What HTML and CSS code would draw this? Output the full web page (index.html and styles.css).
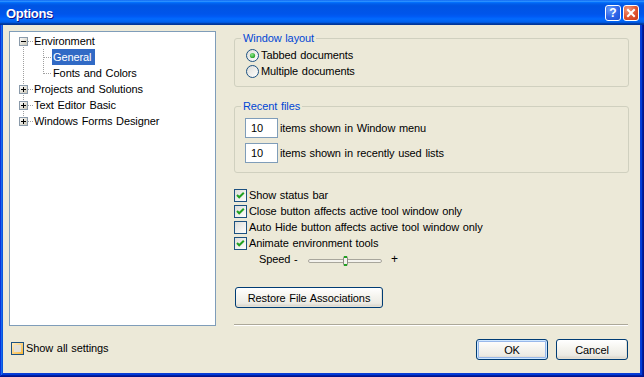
FILE: index.html
```html
<!DOCTYPE html>
<html>
<head>
<meta charset="utf-8">
<link rel="stylesheet" href="styles.css">
</head>
<body>
<svg class="defs" width="0" height="0" aria-hidden="true">
  <defs>
    <linearGradient id="cg" x1="0" y1="0" x2="1" y2="1">
      <stop offset="0" stop-color="#DCDCD7"/>
      <stop offset="1" stop-color="#FFFFFF"/>
    </linearGradient>
    <linearGradient id="og" x1="0" y1="0" x2="1" y2="1">
      <stop offset="0" stop-color="#FFF0CF"/>
      <stop offset="1" stop-color="#F8B330"/>
    </linearGradient>
    <linearGradient id="bg" x1="0" y1="0" x2="1" y2="1">
      <stop offset="0" stop-color="#FFFFFF"/>
      <stop offset="1" stop-color="#C8C4B4"/>
    </linearGradient>
    <radialGradient id="gd" cx="0.4" cy="0.35" r="0.7">
      <stop offset="0" stop-color="#8CE88A"/>
      <stop offset="1" stop-color="#1E9A1E"/>
    </radialGradient>
  </defs>
</svg>
<div class="window">
  <div class="titlebar">
    <span class="title">Options</span>
    <div class="title-buttons">
      <span class="tbtn help">?</span>
      <span class="tbtn close"><svg width="14" height="14" viewBox="0 0 14 14"><path d="M4 4L10 10M10 4L4 10" stroke="#fff" stroke-width="2" stroke-linecap="square"/></svg></span>
    </div>
  </div>
  <div class="client">
    <div class="left">
      <div class="tree">
        <div class="node">
          <svg class="gut" width="23" height="16" viewBox="0 0 23 16">
            <path class="dot" d="M18 8.5H23M13.5 14V16"/>
            <rect class="box" x="9.5" y="4.5" width="8" height="8"/>
            <path d="M11 8.5H16" stroke="#000"/>
          </svg><span class="label">Environment</span>
        </div>
        <div class="node">
          <svg class="gut" width="42" height="16" viewBox="0 0 42 16">
            <path class="dot" d="M13.5 0V16M33.5 0V16M34 8.5H42"/>
          </svg><span class="label sel">General</span>
        </div>
        <div class="node">
          <svg class="gut" width="42" height="16" viewBox="0 0 42 16">
            <path class="dot" d="M13.5 0V16M33.5 0V9M34 8.5H42"/>
          </svg><span class="label">Fonts and Colors</span>
        </div>
        <div class="node">
          <svg class="gut" width="23" height="16" viewBox="0 0 23 16">
            <path class="dot" d="M18 8.5H23M13.5 0V16"/>
            <rect class="box" x="9.5" y="4.5" width="8" height="8"/>
            <path d="M11 8.5H16M13.5 6V11" stroke="#000"/>
          </svg><span class="label">Projects and Solutions</span>
        </div>
        <div class="node">
          <svg class="gut" width="23" height="16" viewBox="0 0 23 16">
            <path class="dot" d="M18 8.5H23M13.5 0V16"/>
            <rect class="box" x="9.5" y="4.5" width="8" height="8"/>
            <path d="M11 8.5H16M13.5 6V11" stroke="#000"/>
          </svg><span class="label">Text Editor Basic</span>
        </div>
        <div class="node">
          <svg class="gut" width="23" height="16" viewBox="0 0 23 16">
            <path class="dot" d="M18 8.5H23M13.5 0V4"/>
            <rect class="box" x="9.5" y="4.5" width="8" height="8"/>
            <path d="M11 8.5H16M13.5 6V11" stroke="#000"/>
          </svg><span class="label">Windows Forms Designer</span>
        </div>
      </div>
      <div class="opt showall">
        <svg width="13" height="13" viewBox="0 0 13 13">
          <rect x="0.5" y="0.5" width="12" height="12" fill="url(#og)" stroke="#1C5180"/>
          <rect x="3" y="3" width="7" height="7" fill="#E2E0D8"/>
        </svg><span>Show all settings</span>
      </div>
    </div>
    <div class="right">
      <fieldset class="group g1">
        <legend>Window layout</legend>
        <div class="opt radio">
          <svg width="13" height="13" viewBox="0 0 13 13">
            <circle cx="6.5" cy="6.5" r="6" fill="url(#cg)" stroke="#1C5180"/>
            <circle cx="6.5" cy="6.5" r="2.6" fill="url(#gd)"/>
          </svg><span>Tabbed documents</span>
        </div>
        <div class="opt radio">
          <svg width="13" height="13" viewBox="0 0 13 13">
            <circle cx="6.5" cy="6.5" r="6" fill="url(#cg)" stroke="#1C5180"/>
          </svg><span>Multiple documents</span>
        </div>
      </fieldset>
      <fieldset class="group g2">
        <legend>Recent files</legend>
        <div class="num-row"><span class="num">10</span><span>items shown in Window menu</span></div>
        <div class="num-row"><span class="num">10</span><span>items shown in recently used lists</span></div>
      </fieldset>
      <div class="checks">
        <div class="opt">
          <svg width="13" height="13" viewBox="0 0 13 13">
            <rect x="0.5" y="0.5" width="12" height="12" fill="url(#cg)" stroke="#1C5180"/>
            <path d="M3 6L5.2 8.3L9.8 3.7" stroke="#21A121" stroke-width="2" fill="none"/>
          </svg><span>Show status bar</span>
        </div>
        <div class="opt">
          <svg width="13" height="13" viewBox="0 0 13 13">
            <rect x="0.5" y="0.5" width="12" height="12" fill="url(#cg)" stroke="#1C5180"/>
            <path d="M3 6L5.2 8.3L9.8 3.7" stroke="#21A121" stroke-width="2" fill="none"/>
          </svg><span>Close button affects active tool window only</span>
        </div>
        <div class="opt">
          <svg width="13" height="13" viewBox="0 0 13 13">
            <rect x="0.5" y="0.5" width="12" height="12" fill="url(#cg)" stroke="#1C5180"/>
          </svg><span>Auto Hide button affects active tool window only</span>
        </div>
        <div class="opt">
          <svg width="13" height="13" viewBox="0 0 13 13">
            <rect x="0.5" y="0.5" width="12" height="12" fill="url(#cg)" stroke="#1C5180"/>
            <path d="M3 6L5.2 8.3L9.8 3.7" stroke="#21A121" stroke-width="2" fill="none"/>
          </svg><span>Animate environment tools</span>
        </div>
        <div class="speed">
          <span class="speed-label">Speed -</span>
          <svg class="slider" width="74" height="16" viewBox="0 0 74 16">
            <rect x="0.5" y="8.5" width="73" height="3" rx="1.5" fill="#F4F3EE" stroke="#A8A69C"/>
            <rect x="35.5" y="5.5" width="4" height="9" rx="1" fill="#F4F3EE" stroke="#8E8C84"/>
            <rect x="36" y="5" width="3" height="2" fill="#21A121"/>
            <rect x="36" y="13" width="3" height="2" fill="#21A121"/>
          </svg>
          <span class="plus">+</span>
        </div>
      </div>
      <button class="btn restore">Restore File Associations</button>
      <div class="sep"></div>
      <div class="actions">
        <button class="btn default">OK</button>
        <button class="btn">Cancel</button>
      </div>
    </div>
  </div>
</div>
</body>
</html>
```

FILE: styles.css
```css
* { box-sizing: border-box; }

html, body {
  margin: 0;
  padding: 0;
  width: 644px;
  height: 377px;
  overflow: hidden;
}

body {
  font-family: "Liberation Sans", Arial, sans-serif;
  font-size: 11px;
  letter-spacing: -0.1px;
  word-spacing: 0.8px;
  color: #000;
}

.defs { position: absolute; width: 0; height: 0; }

.window {
  width: 644px;
  height: 377px;
  display: flex;
  flex-direction: column;
  background: #0A3DD4;
  box-shadow: inset -1px -1px #00138C, inset 1px 1px #0831D9,
              inset -2px -2px #001EA0, inset 2px 2px #166AEE,
              inset -3px -3px #003BDA, inset 3px 3px #0855DD;
}

.titlebar {
  height: 25px;
  flex: none;
  display: flex;
  align-items: center;
  justify-content: space-between;
  padding: 0 5px 0 6px;
  background: linear-gradient(180deg, #0058EE 0%, #3593FF 4%, #288EFF 6%, #127DFF 8%, #036FFC 10%, #0262EE 14%, #0057E5 20%, #0054E3 24%, #0055EB 56%, #005BF5 66%, #026AFE 76%, #0062EF 86%, #0052D6 92%, #0040AB 94%, #003092 100%);
}

.title {
  color: #fff;
  font-weight: bold;
  font-size: 13px;
  letter-spacing: -0.3px;
  word-spacing: 0;
  text-shadow: 1px 1px #0F1089;
  padding-top: 1px;
}

.title-buttons {
  display: flex;
  gap: 2px;
}

.tbtn {
  width: 16px;
  height: 16px;
  border: 1px solid #fff;
  border-radius: 3px;
  display: flex;
  align-items: center;
  justify-content: center;
  color: #fff;
  font-weight: bold;
  font-size: 12px;
  letter-spacing: 0;
}

.tbtn.help {
  background: radial-gradient(circle at 30% 25%, #6A9CF8 0%, #2D64E8 55%, #1E4FD0 100%);
}

.tbtn.close {
  background: radial-gradient(circle at 30% 25%, #F09A80 0%, #E0532F 55%, #C8391A 100%);
}

.client {
  flex: 1;
  margin: 0 4px 4px 3px;
  background: #ECE9D8;
  display: flex;
  gap: 18px;
  padding: 6px 11px 0 6px;
}

.left {
  width: 207px;
  flex: none;
  display: flex;
  flex-direction: column;
}

.tree {
  height: 295px;
  border: 1px solid #7F9DB9;
  background: #fff;
  padding-top: 1px;
}

.node {
  height: 16px;
  display: flex;
  align-items: center;
}

.gut { display: block; flex: none; }

.dot {
  stroke: #A0A0A0;
  stroke-dasharray: 1 1;
  fill: none;
  shape-rendering: crispEdges;
}

.box {
  fill: url(#bg);
  stroke: #8A9AAA;
  shape-rendering: crispEdges;
}

.gut path[stroke="#000"] { shape-rendering: crispEdges; }

.label {
  height: 16px;
  line-height: 16px;
  padding: 0 4px 0 1px;
  white-space: nowrap;
}

.label.sel {
  background: #316AC5;
  color: #fff;
}

.opt {
  height: 16px;
  display: flex;
  align-items: center;
  gap: 2px;
  white-space: nowrap;
}

.opt svg { display: block; flex: none; }

.showall {
  margin-top: 14px;
  margin-left: 2px;
}

.right {
  flex: 1;
  display: flex;
  flex-direction: column;
}

.group {
  margin: 0;
  border: 1px solid #D0D0BF;
  border-radius: 3px;
  padding: 0 10px;
  min-width: 0;
}

.group legend {
  color: #0046D5;
  line-height: 14px;
  padding: 0 2px;
  margin-left: -4px;
}

.g1 { padding-top: 2px; padding-bottom: 7px; }

.radio { padding-left: 1px; }

.g2 {
  margin-top: 12px;
  padding-top: 5px;
  padding-bottom: 9px;
  display: flex;
  flex-direction: column;
  gap: 5px;
}

.num-row {
  display: flex;
  align-items: center;
  gap: 2px;
  white-space: nowrap;
}

.num {
  width: 33px;
  height: 20px;
  border: 1px solid #7F9DB9;
  background: #fff;
  padding-left: 5px;
  line-height: 18px;
}

.checks {
  margin-top: 14px;
  display: flex;
  flex-direction: column;
}

.speed {
  height: 16px;
  display: flex;
  align-items: center;
  padding-left: 25px;
  white-space: nowrap;
}

.speed-label { width: 49px; }

.slider { display: block; flex: none; }

.plus {
  margin-left: 9px;
  font-size: 12px;
}

.btn {
  height: 21px;
  border: 1px solid #003C74;
  border-radius: 3px;
  background: linear-gradient(180deg, #FFFFFF 0%, #F6F5F0 40%, #ECEBE4 80%, #D6D0C5 100%);
  font: inherit;
  letter-spacing: inherit;
  word-spacing: inherit;
  color: #000;
  padding: 0;
  box-shadow: inset -1px -1px 0 #E3E0D4;
}

.restore {
  margin-top: 20px;
  margin-left: 1px;
  width: 148px;
  align-self: flex-start;
}

.sep {
  margin-top: 16px;
  height: 2px;
  margin-right: 1px;
  border-top: 1px solid #ACA899;
  border-bottom: 1px solid #FFFFFF;
}

.actions {
  margin-top: 13px;
  display: flex;
  justify-content: flex-end;
  gap: 8px;
  padding-right: 1px;
}

.actions .btn { width: 72px; }

.btn.default {
  box-shadow: inset 0 0 0 1px #CEE7FF, inset 0 0 0 2px #98B8EA;
}
```
